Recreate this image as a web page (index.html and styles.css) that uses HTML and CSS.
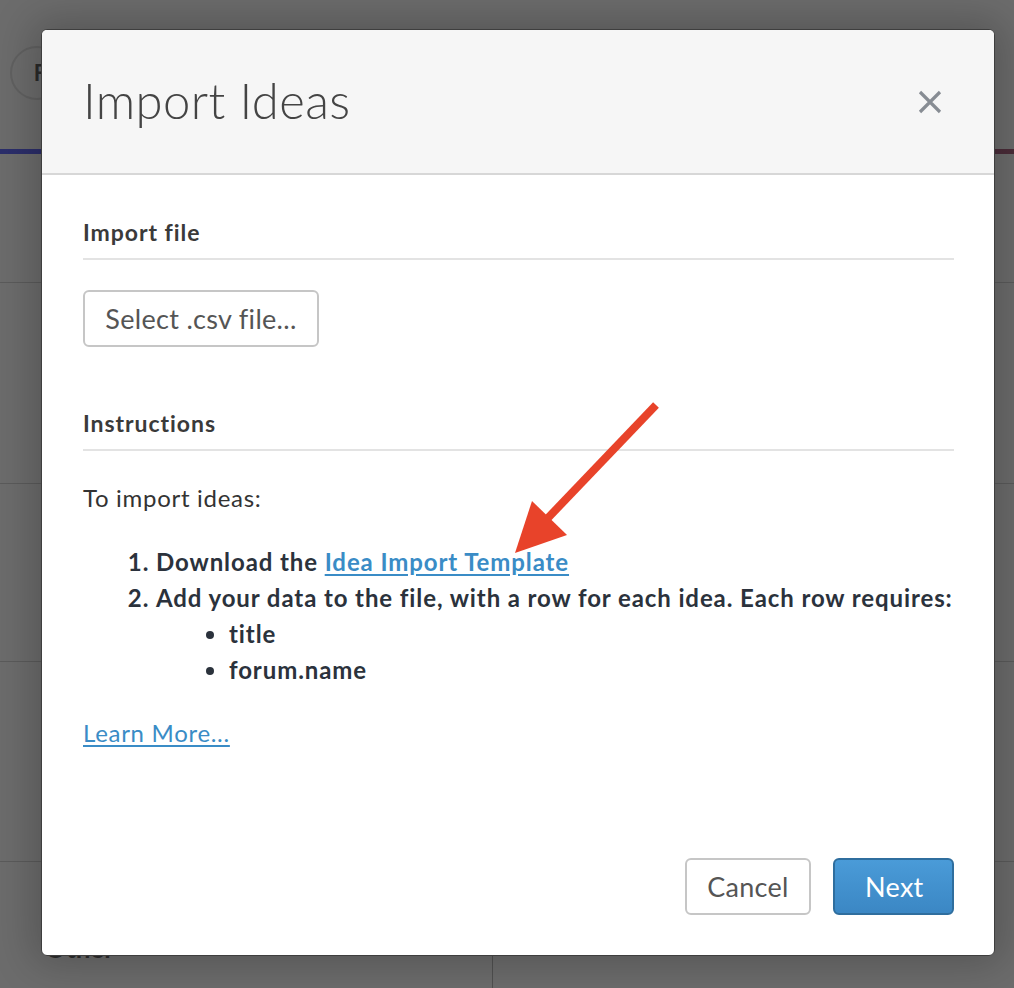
FILE: index.html
```html
<!DOCTYPE html>
<html lang="en">

<head>
    <meta charset="UTF-8">
    <meta name="viewport" content="width=device-width, initial-scale=1.0">
    <title>Import Ideas</title>
    <link rel="stylesheet" href="styles.css">
</head>

<body>
    <!-- page behind the dialog -->
    <div class="page">
        <div class="toolbar">
            <span class="round-btn">F</span>
        </div>
        <div class="toolbar-line"></div>
        <div class="row row-a"></div>
        <div class="row row-b"></div>
        <div class="row row-c"></div>
        <div class="row row-d"></div>
        <div class="row-last">
            <div class="cell">Other</div>
            <div class="cell"></div>
        </div>
    </div>

    <!-- dialog -->
    <div class="modal">
        <div class="modal-header">
            <h1>Import Ideas</h1>
            <button class="close-btn" aria-label="Close">
                <svg width="24" height="24" viewBox="0 0 24 24">
                    <path d="M2 2 L22 22 M22 2 L2 22" stroke="#878c93" stroke-width="3.2" fill="none" />
                </svg>
            </button>
        </div>
        <div class="modal-body">
            <h3 class="section-title">Import file</h3>
            <button class="btn btn-default">Select .csv file...</button>

            <h3 class="section-title instructions">Instructions</h3>
            <p class="intro">To import ideas:</p>
            <ol class="steps">
                <li>Download the <a href="#">Idea Import Template</a></li>
                <li>Add your data to the file, with a row for each idea. Each row requires:
                    <ul>
                        <li>title</li>
                        <li>forum.name</li>
                    </ul>
                </li>
            </ol>
            <a class="learn-more" href="#">Learn More...</a>
        </div>
        <div class="modal-footer">
            <button class="btn btn-default">Cancel</button>
            <button class="btn btn-primary">Next</button>
        </div>
    </div>

    <!-- annotation arrow -->
    <svg class="arrow" width="1014" height="988" viewBox="0 0 1014 988">
        <line x1="656" y1="405" x2="546" y2="520" stroke="#e8432a" stroke-width="8" />
        <polygon points="515,553 532,501 567,535" fill="#e8432a" />
    </svg>
</body>

</html>
```

FILE: styles.css
```css
/* 基础 */

html,
body {
    margin: 0;
    height: 100%;
}

body {
    position: relative;
    width: 1014px;
    height: 988px;
    overflow: hidden;
    background-color: #6c6c6c;
    font-family: "Lato", "Open Sans", sans-serif;
}

/* 背后的页面（已被遮罩变暗） */

.page {
    display: flex;
    flex-direction: column;
    height: 100%;
}

.toolbar {
    height: 149px;
    display: flex;
    align-items: center;
    padding-left: 10px;
}

.round-btn {
    width: 54px;
    height: 54px;
    box-sizing: border-box;
    border: 2px solid #616161;
    border-radius: 50%;
    display: flex;
    align-items: center;
    justify-content: center;
    font-weight: 700;
    font-size: 22px;
    color: #2a2a2a;
    margin-top: -4px;
    padding-left: 6px;
}

.toolbar-line {
    height: 5px;
    background: linear-gradient(to right, #2b2e6b, #3a2d55 60%, #4b2c38);
}

.row {
    border-bottom: 1px solid #5b5b5b;
}

.row-a {
    height: 128px;
}

.row-b {
    height: 200px;
}

.row-c {
    height: 177px;
}

.row-d {
    height: 199px;
}

.row-last {
    flex: 1;
    display: grid;
    grid-template-columns: 493px 1fr;
}

.row-last .cell:first-child {
    border-right: 1px solid #505050;
    padding: 70px 0 0 45px;
    font-size: 26px;
    font-weight: 700;
    color: #2c2c2c;
}

/* 对话框 */

.modal {
    position: absolute;
    left: 41px;
    top: 29px;
    width: 954px;
    height: 927px;
    box-sizing: border-box;
    display: flex;
    flex-direction: column;
    background-color: #fff;
    border: 1px solid #3e3e3e;
    border-radius: 6px;
    box-shadow: 0 0 40px 8px rgba(0, 0, 0, 0.22);
    overflow: hidden;
}

.modal-header {
    height: 145px;
    box-sizing: border-box;
    background-color: #f6f6f6;
    border-bottom: 2px solid #d7d7d7;
    display: flex;
    align-items: center;
    justify-content: space-between;
    padding: 0 52px 0 41px;
}

.modal-header h1 {
    margin: 0 0 4px;
    font-weight: 300;
    font-size: 49px;
    color: #444;
    letter-spacing: 0.4px;
}

.close-btn {
    background: none;
    border: none;
    padding: 0;
    cursor: pointer;
    display: flex;
}

.modal-body {
    flex: 1;
    padding: 43px 40px 0 41px;
    color: #333;
    font-size: 24px;
    letter-spacing: 0.7px;
}

.section-title {
    margin: 0 0 30px;
    padding-bottom: 12px;
    border-bottom: 2px solid #e3e3e3;
    font-size: 23px;
    font-weight: 700;
    color: #3a3a3a;
    letter-spacing: 0.95px;
}

.section-title.instructions {
    margin-top: 62px;
    margin-bottom: 32px;
}

.intro {
    margin: 0 0 32px;
    color: #333;
}

.steps {
    margin: 0 0 30px;
    padding-left: 73px;
    font-weight: 700;
    color: #2b323c;
    line-height: 36px;
    letter-spacing: 0.9px;
}

.steps ul {
    margin: 0;
    padding-left: 73px;
    list-style: disc;
}

a {
    color: #3a8cc6;
    text-decoration: underline;
    text-underline-offset: 3px;
}

.learn-more {
    font-weight: 400;
}

/* 按钮 */

.btn {
    font-family: inherit;
    font-size: 27px;
    height: 57px;
    padding: 0 20px;
    box-sizing: border-box;
    border-radius: 6px;
    cursor: pointer;
    letter-spacing: 0.3px;
}

.btn-default {
    background-color: #fff;
    color: #555;
    border: 2px solid #c6c6c6;
}

.btn-primary {
    background: linear-gradient(to bottom, #4a9bd8, #3b87c4);
    color: #fff;
    border: 2px solid #2f6e9e;
    padding: 0 30px;
}

.modal-body .btn-default {
    width: 236px;
}

.modal-footer {
    display: flex;
    justify-content: flex-end;
    gap: 22px;
    padding: 0 40px 40px;
}

.modal-footer .btn-default {
    width: 126px;
}

.modal-footer .btn-primary {
    width: 121px;
}

/* 标注箭头 */

.arrow {
    position: absolute;
    left: 0;
    top: 0;
    pointer-events: none;
}
```
